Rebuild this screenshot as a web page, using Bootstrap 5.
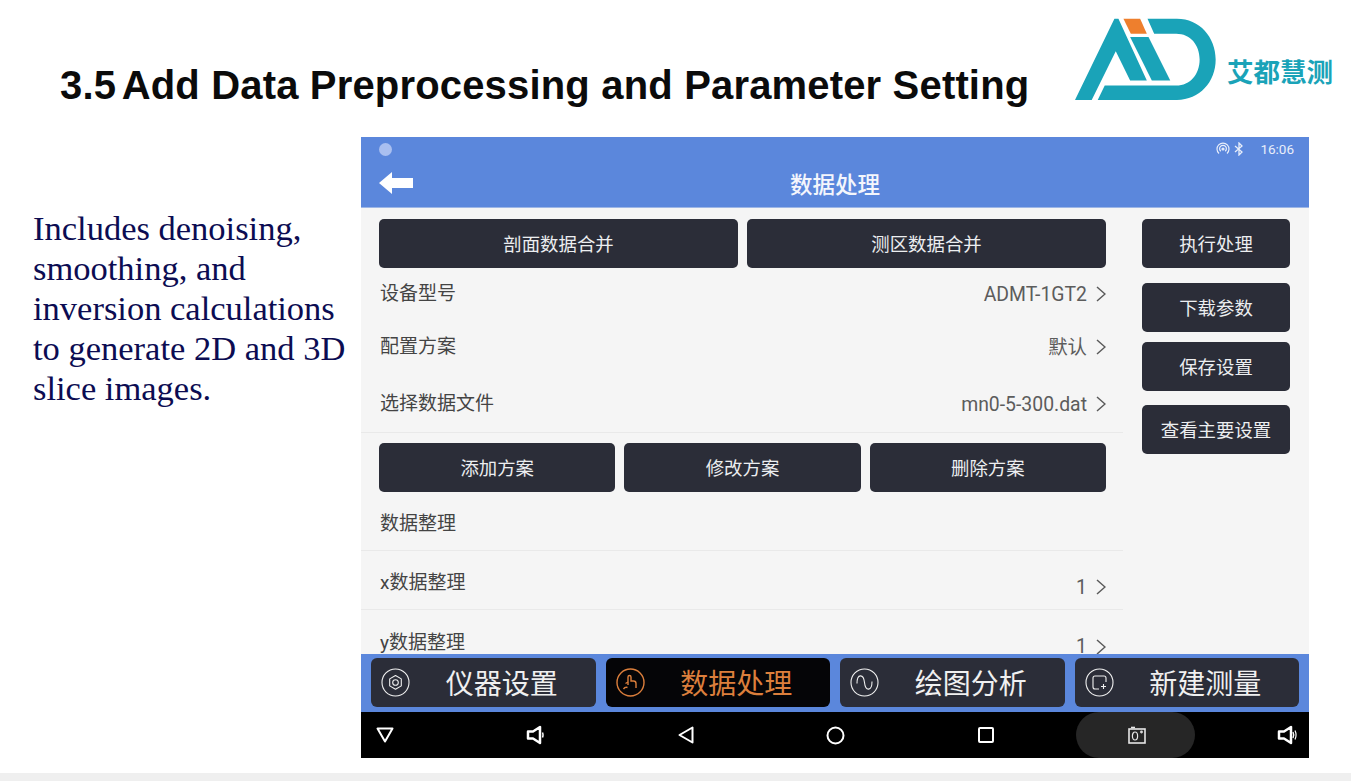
<!doctype html>
<html lang="zh-CN">

<head>
  <meta charset="utf-8">
  <meta name="viewport" content="width=device-width, initial-scale=1">
  <title>3.5 Add Data Preprocessing and Parameter Setting</title>
  <link href="https://cdn.jsdelivr.net/npm/bootstrap@5.3.3/dist/css/bootstrap.min.css" rel="stylesheet">
  <style>
    html, body { height: 781px; overflow: hidden; background: #fff; }
    body { font-family: "Roboto", "Noto Sans CJK SC", sans-serif; }

    .slide-head { height: 137px; }
    .slide-title { font: 700 40px/1 "Liberation Sans", sans-serif; letter-spacing: .17px; color: #0b0b0b; margin: 65px 0 0 60px; white-space: nowrap; }
    .sec-no { margin-right: 5.5px; }
    .brand { margin: 18px 18px 0 0; gap: 10px; }
    .brand-name { font: 700 26.5px/1 "Noto Sans CJK SC", sans-serif; color: #1aa3b8; margin-top: 40px; white-space: nowrap; }

    .side-copy { width: 361px; flex: none; padding: 71px 0 0 33px; font: 34.5px/40px "Liberation Serif", serif; color: #0c0c52; }
    .device { width: 948px; height: 621px; flex: none; }

    .status-bar { height: 24px; background: #5b87dc; color: #e8eefa; font-size: 13.5px; padding: 0 15px 0 18px; }
    .status-dot { width: 13px; height: 13px; border-radius: 50%; background: #a9bff0; }
    .app-bar { height: 47px; background: #5b87dc; padding: 11px 0 0 18px; position: relative; border-bottom: 1px solid #9db6e6; }
    .app-title { position: absolute; left: 0; right: 0; top: 7px; text-align: center; font: 500 22.5px/30px "Noto Sans CJK SC", sans-serif; color: #f4f6fc; margin: 0; }

    .work-area { height: 446px; background: #f5f5f5; overflow: hidden; }
    .left-pane { width: 762px; flex: none; padding-top: 11px; }
    .right-pane { width: 148px; flex: none; margin-left: 19px; padding-top: 11px; }

    .dark-btn { background: #2b2d38; color: #eceef0; border: 0; border-radius: 5px; height: 49px; padding: 0; font: 18.4px/49px "Noto Sans CJK SC", sans-serif; }
    .btn-row { padding: 0 0 0 18px; gap: 9px; width: 745px; }
    .btn-row .dark-btn { flex: 1 1 0; }
    .right-pane .dark-btn { width: 148px; display: block; }
    .gap-a { margin-top: 15px; }
    .gap-b { margin-top: 10px; }
    .gap-c { margin-top: 14px; }

    .set-row { padding: 3px 17px 0 19px; font-size: 19px; color: #444; width: 762px; }
    .set-row .val { color: #5c5c5c; font-size: 19.4px; }
    .set-row svg { margin-left: 9px; }
    .row-h50 { height: 50px; }
    .row-h56 { height: 56px; }
    .row-h59 { height: 59px; }
    .row-low { padding-top: 7px; }
    .rule-b { border-bottom: 1px solid #e9e9e9; }
    .push-down { position: relative; top: 4px; }
    .btn-wrap { padding: 10px 0 0; }

    .tab-bar { height: 58px; background: #5b87dc; padding: 4px 10px 5px; gap: 10px; }
    .tab-btn { flex: 1 1 0; background: #2b2d38; color: #f0f0f0; border: 0; border-radius: 6px; padding: 0 2px 0 10px; font: 28px/49px "Noto Sans CJK SC", sans-serif; }
    .tab-btn.on { background: #050507; color: #dc7f3c; }
    .tab-btn span { flex: 1 1 0; text-align: center; }

    .nav-keys { height: 46px; background: #000; position: relative; padding: 0 10px 0 12px; }
    .key-slot { width: 24px; position: relative; }
    .key-pill { position: absolute; left: 715px; top: 0; width: 119px; height: 46px; border-radius: 23px; background: #262626; }

    .foot-strip { height: 8px; margin-top: 15px; background: #efefef; }
  </style>
</head>

<body>
  <svg width="0" height="0" class="d-none">
    <symbol id="chev" viewBox="0 0 10 16"><polyline points="1,1 9,8 1,15" fill="none" stroke="#5a5a5a" stroke-width="1.5"/></symbol>
  </svg>

  <div class="slide-head d-flex justify-content-between">
    <h1 class="slide-title"><span class="sec-no">3.5</span>Add Data Preprocessing and Parameter Setting</h1>
    <div class="brand d-flex">
      <svg width="142" height="83" viewBox="75 53 425 248">
        <path fill="#1aa3b8" d="M75 298 193 55h12l85 185h-50l-43-88-72 146z"/>
        <path fill="#1aa3b8" d="M240 110h55l65 130h-55z"/>
        <path fill="#ee7f2d" d="M220 55h50l20 45h-48z"/>
        <path fill="#1aa3b8" d="M292 55h88c68 0 116 55 116 122s-48 121-116 121H143l21-43h214c42 0 70-34 70-78s-28-77-70-77h-66z"/>
      </svg>
      <div class="brand-name">艾都慧测</div>
    </div>
  </div>

  <div class="d-flex">
    <div class="side-copy">Includes denoising, smoothing, and inversion calculations to generate 2D and 3D slice images.</div>

    <div class="device d-flex flex-column">
      <div class="status-bar d-flex align-items-center">
        <div class="status-dot"></div>
        <svg class="ms-auto" width="14" height="14" viewBox="0 0 14 14" fill="none" stroke="#e8eefa" stroke-width="1.2">
          <path d="M3 11.500a6 6 0 1 1 8 0"/><path d="M4.800 9.300a3.400 3.400 0 1 1 4.400 0"/><circle cx="7" cy="7" r="1" fill="#e8eefa"/>
        </svg>
        <svg class="ms-1" width="10" height="14" viewBox="0 0 10 14" fill="none" stroke="#e8eefa" stroke-width="1.3">
          <path d="M1 4l7 6-3 3V1l3 3-7 6"/>
        </svg>
        <span class="ms-3">16:06</span>
      </div>
      <div class="app-bar">
        <svg width="34" height="22" viewBox="0 0 34 22" class="d-block"><path fill="#fff" d="M0 11 13 0v6h21v10H13v6z"/></svg>
        <p class="app-title">数据处理</p>
      </div>

      <div class="work-area d-flex">
        <div class="left-pane">
          <div class="btn-row d-flex">
            <button class="btn dark-btn">剖面数据合并</button>
            <button class="btn dark-btn">测区数据合并</button>
          </div>
          <div class="set-row row-h50 d-flex align-items-center justify-content-between">
            <span>设备型号</span>
            <span class="val d-flex align-items-center">ADMT-1GT2<svg width="10" height="16"><use href="#chev"/></svg></span>
          </div>
          <div class="set-row row-h56 d-flex align-items-center justify-content-between">
            <span>配置方案</span>
            <span class="val d-flex align-items-center">默认<svg width="10" height="16"><use href="#chev"/></svg></span>
          </div>
          <div class="set-row row-h59 rule-b d-flex align-items-center justify-content-between">
            <span>选择数据文件</span>
            <span class="val d-flex align-items-center">mn0-5-300.dat<svg width="10" height="16"><use href="#chev"/></svg></span>
          </div>
          <div class="btn-wrap">
            <div class="btn-row d-flex">
              <button class="btn dark-btn">添加方案</button>
              <button class="btn dark-btn">修改方案</button>
              <button class="btn dark-btn">删除方案</button>
            </div>
          </div>
          <div class="set-row row-h59 row-low rule-b d-flex align-items-center">
            <span>数据整理</span>
          </div>
          <div class="set-row row-h59 row-low rule-b d-flex align-items-center justify-content-between">
            <span>x数据整理</span>
            <span class="val d-flex align-items-center push-down">1<svg width="10" height="16"><use href="#chev"/></svg></span>
          </div>
          <div class="set-row row-h59 row-low d-flex align-items-center justify-content-between">
            <span>y数据整理</span>
            <span class="val d-flex align-items-center push-down">1<svg width="10" height="16"><use href="#chev"/></svg></span>
          </div>
        </div>
        <div class="right-pane">
          <button class="btn dark-btn">执行处理</button>
          <button class="btn dark-btn gap-a">下载参数</button>
          <button class="btn dark-btn gap-b">保存设置</button>
          <button class="btn dark-btn gap-c">查看主要设置</button>
        </div>
      </div>

      <div class="tab-bar d-flex">
        <button class="btn tab-btn d-flex align-items-center">
          <svg width="29" height="29" viewBox="0 0 29 29" fill="none" stroke="#f0f0f0" stroke-width="1.1">
            <circle cx="14.500" cy="14.500" r="13.500"/>
            <path d="M14.500 7.500l5.800 3.400v7l-5.800 3.400-5.800-3.400v-7z" stroke-linejoin="round"/>
            <circle cx="14.500" cy="14.500" r="2.800"/>
          </svg>
          <span>仪器设置</span>
        </button>
        <button class="btn tab-btn on d-flex align-items-center">
          <svg width="29" height="29" viewBox="0 0 29 29" fill="none" stroke="#dc7f3c" stroke-width="1.4">
            <circle cx="14.500" cy="14.500" r="13.500"/>
            <path d="M12 17V9a1.500 1.500 0 0 1 3 0v4h2.500a2.500 2.500 0 0 1 2.500 2.500V20"/>
            <path d="M12 14l-2.500 1.500M7.500 21c1-1.500 2.500-2 4-1.500"/>
          </svg>
          <span>数据处理</span>
        </button>
        <button class="btn tab-btn d-flex align-items-center">
          <svg width="29" height="29" viewBox="0 0 29 29" fill="none" stroke="#f0f0f0" stroke-width="1.1">
            <circle cx="14.500" cy="14.500" r="13.500"/>
            <path d="M7 15.500c0-10 6.500-10 7.500-1 1 9 7.500 9 7.500-1"/>
          </svg>
          <span>绘图分析</span>
        </button>
        <button class="btn tab-btn d-flex align-items-center">
          <svg width="29" height="29" viewBox="0 0 29 29" fill="none" stroke="#f0f0f0" stroke-width="1.1">
            <circle cx="14.500" cy="14.500" r="13.500"/>
            <path d="M14 21h-4a2 2 0 0 1-2-2V10a2 2 0 0 1 2-2h9a2 2 0 0 1 2 2v4"/>
            <path d="M18.500 16v5M16 18.500h5"/>
          </svg>
          <span>新建测量</span>
        </button>
      </div>

      <div class="nav-keys d-flex align-items-center justify-content-between">
        <div class="key-pill"></div>
        <div class="key-slot d-flex justify-content-center">
          <svg width="18" height="16" viewBox="0 0 18 16" fill="none" stroke="#fff" stroke-width="2"><path d="M1.500 1.500h15L9 14.500z" stroke-linejoin="round"/></svg>
        </div>
        <div class="key-slot d-flex justify-content-center">
          <svg width="18" height="20" viewBox="0 0 18 20" fill="none" stroke="#fff" stroke-width="2.500"><path d="M2 6.500h5L14 2v16l-7-4.500H2z" stroke-linejoin="round"/><path d="M16.500 7.500c.7 1.700.7 3.300 0 5" stroke-width="1.500"/></svg>
        </div>
        <div class="key-slot d-flex justify-content-center">
          <svg width="16" height="18" viewBox="0 0 16 18" fill="none" stroke="#fff" stroke-width="2"><path d="M14.500 1.500v15L1.500 9z" stroke-linejoin="round"/></svg>
        </div>
        <div class="key-slot d-flex justify-content-center">
          <svg width="19" height="19" viewBox="0 0 19 19" fill="none" stroke="#fff" stroke-width="2"><circle cx="9.500" cy="9.500" r="8"/></svg>
        </div>
        <div class="key-slot d-flex justify-content-center">
          <svg width="16" height="16" viewBox="0 0 16 16" fill="none" stroke="#fff" stroke-width="2"><rect x="1" y="1" width="14" height="14" rx="1"/></svg>
        </div>
        <div class="key-slot d-flex justify-content-center">
          <svg width="18" height="18" viewBox="0 0 18 18" fill="none" stroke="#e6e6e6" stroke-width="1.600"><rect x="1" y="3" width="16" height="14"/><ellipse cx="7" cy="10" rx="2.600" ry="4" stroke-width="1.200"/><circle cx="13.500" cy="6" r=".6"/><path d="M3 1.500h4"/></svg>
        </div>
        <div class="key-slot d-flex justify-content-center">
          <svg width="20" height="20" viewBox="0 0 20 20" fill="none" stroke="#fff" stroke-width="2.500"><path d="M2 6.500h5L14 2v16l-7-4.500H2z" stroke-linejoin="round"/><path d="M16 7c1 2 1 4 0 6" stroke-width="1.400"/><path d="M18 5.500c1.400 3 1.400 6 0 9" stroke-width="1.200"/></svg>
        </div>
      </div>
    </div>
  </div>

  <div class="foot-strip"></div>

  <script src="https://cdn.jsdelivr.net/npm/bootstrap@5.3.3/dist/js/bootstrap.bundle.min.js"></script>
</body>

</html>
